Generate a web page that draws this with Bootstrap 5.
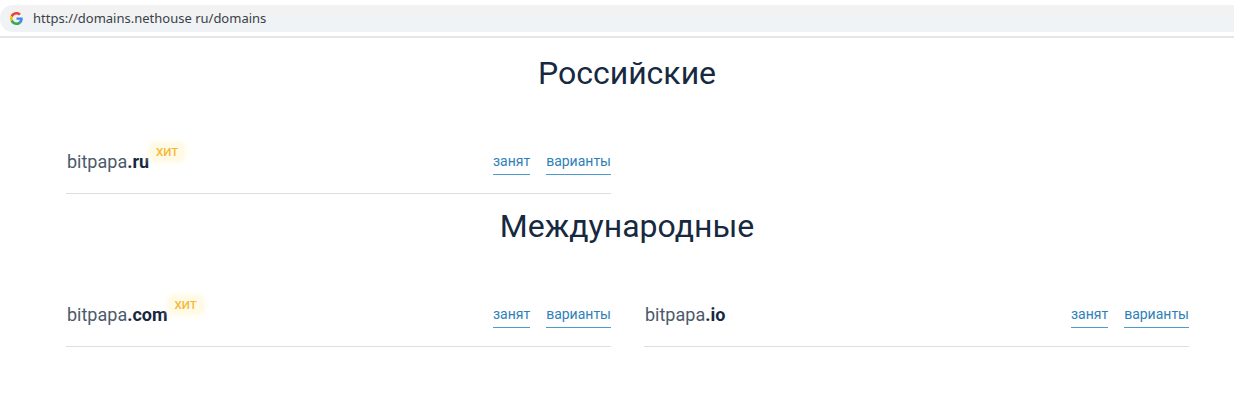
<!DOCTYPE html>
<html lang="ru">
<head>
  <meta charset="UTF-8" />
  <meta name="viewport" content="width=device-width, initial-scale=1" />
  <title>Domains</title>
  <link href="https://cdn.jsdelivr.net/npm/bootstrap@5.3.3/dist/css/bootstrap.min.css" rel="stylesheet" />
  <style>
    body {
      font-family: Roboto, sans-serif;
      color: #16293f;
      background: #fff;
      overflow: hidden;
    }
    .url-strip {
      height: 38px;
      padding-top: 5px;
      border-bottom: 2px solid #e6e6e6;
    }
    .url-field {
      height: 27px;
      padding-left: 10px;
      background: linear-gradient(#f2f2f2 0, #f2f2f2 10px, #eff3f6 10px);
      border-radius: 13px 0 0 13px;
      font-family: "Noto Sans", sans-serif;
      font-size: 13px;
      color: #3c4043;
    }
    .url-text { margin-left: 2px; }
    .zone-title {
      font-size: 32px;
      font-weight: 400;
      line-height: 40px;
      margin: 0;
      padding-left: 20px;
      color: #16293f;
    }
    .title-first { padding-top: 15px; height: 60px; }
    .title-second { padding-top: 12px; height: 57px; }
    .zones {
      padding: 0 44px 0 66px;
      column-gap: 33px;
    }
    .zone-cell { width: 545px; }
    .zone-row {
      height: 96px;
      padding-top: 52px;
      border-bottom: 1px solid #dcdfe2;
    }
    .domain-name {
      padding-left: 1px;
      font-size: 18px;
      line-height: 24px;
      color: #4b5a6b;
    }
    .domain-name b {
      font-weight: 700;
      color: #16293f;
    }
    .hit-tag {
      top: -7px;
      left: calc(100% + 1px);
      padding: 2px 6px;
      font-size: 11.5px;
      font-weight: 500;
      line-height: 14px;
      color: #f7b733;
      background: #fffae6;
      border-radius: 6px;
      box-shadow: 0 0 6px 2px #fffae6;
    }
    .zone-link {
      margin-top: 1px;
      font-size: 14px;
      line-height: 20px;
      padding-bottom: 3px;
      color: #2f7fb8;
      border-bottom: 1px solid #4a9ccc;
      text-decoration: none;
    }
  </style>
</head>
<body>

<div class="url-strip">
  <div class="url-field d-flex align-items-center">
    <svg width="13" height="13" viewBox="0 0 48 48" class="flex-shrink-0 me-2">
      <path fill="#ea4335" d="M24 9.500c3.500 0 6.700 1.200 9.200 3.600l6.800-6.800C35.900 2.400 30.500 0 24 0 14.600 0 6.500 5.400 2.600 13.200l8 6.200C12.400 13.700 17.700 9.500 24 9.500z"/>
      <path fill="#4285f4" d="M46.900 24.500c0-1.600-.1-3.100-.4-4.500H24v9h12.900c-.6 3-2.200 5.500-4.800 7.200l7.700 6c4.500-4.200 7.100-10.300 7.100-17.700z"/>
      <path fill="#fbbc05" d="M10.500 28.600c-.5-1.400-.8-3-.8-4.600s.3-3.200.8-4.600l-8-6.200C.9 16.500 0 20.100 0 24s.9 7.500 2.600 10.800l7.900-6.200z"/>
      <path fill="#34a853" d="M24 48c6.500 0 11.900-2.100 15.900-5.800l-7.700-6c-2.200 1.400-4.900 2.300-8.200 2.300-6.300 0-11.600-4.200-13.500-9.900l-7.900 6.200C6.500 42.600 14.600 48 24 48z"/>
    </svg>
    <span class="url-text">https://domains.nethouse ru/domains</span>
  </div>
</div>

<h2 class="zone-title title-first text-center">Российские</h2>
<div class="zones d-flex">
  <div class="zone-cell">
    <div class="zone-row d-flex justify-content-between align-items-start">
      <span class="domain-name position-relative">bitpapa<b>.ru</b><span class="hit-tag position-absolute">ХИТ</span></span>
      <span class="d-flex gap-3">
        <a class="zone-link" href="#">занят</a>
        <a class="zone-link" href="#">варианты</a>
      </span>
    </div>
  </div>
</div>

<h2 class="zone-title title-second text-center">Международные</h2>
<div class="zones d-flex">
  <div class="zone-cell">
    <div class="zone-row d-flex justify-content-between align-items-start">
      <span class="domain-name position-relative">bitpapa<b>.com</b><span class="hit-tag position-absolute">ХИТ</span></span>
      <span class="d-flex gap-3">
        <a class="zone-link" href="#">занят</a>
        <a class="zone-link" href="#">варианты</a>
      </span>
    </div>
  </div>
  <div class="zone-cell">
    <div class="zone-row d-flex justify-content-between align-items-start">
      <span class="domain-name">bitpapa<b>.io</b></span>
      <span class="d-flex gap-3">
        <a class="zone-link" href="#">занят</a>
        <a class="zone-link" href="#">варианты</a>
      </span>
    </div>
  </div>
</div>

<script src="https://cdn.jsdelivr.net/npm/bootstrap@5.3.3/dist/js/bootstrap.bundle.min.js"></script>
</body>
</html>
